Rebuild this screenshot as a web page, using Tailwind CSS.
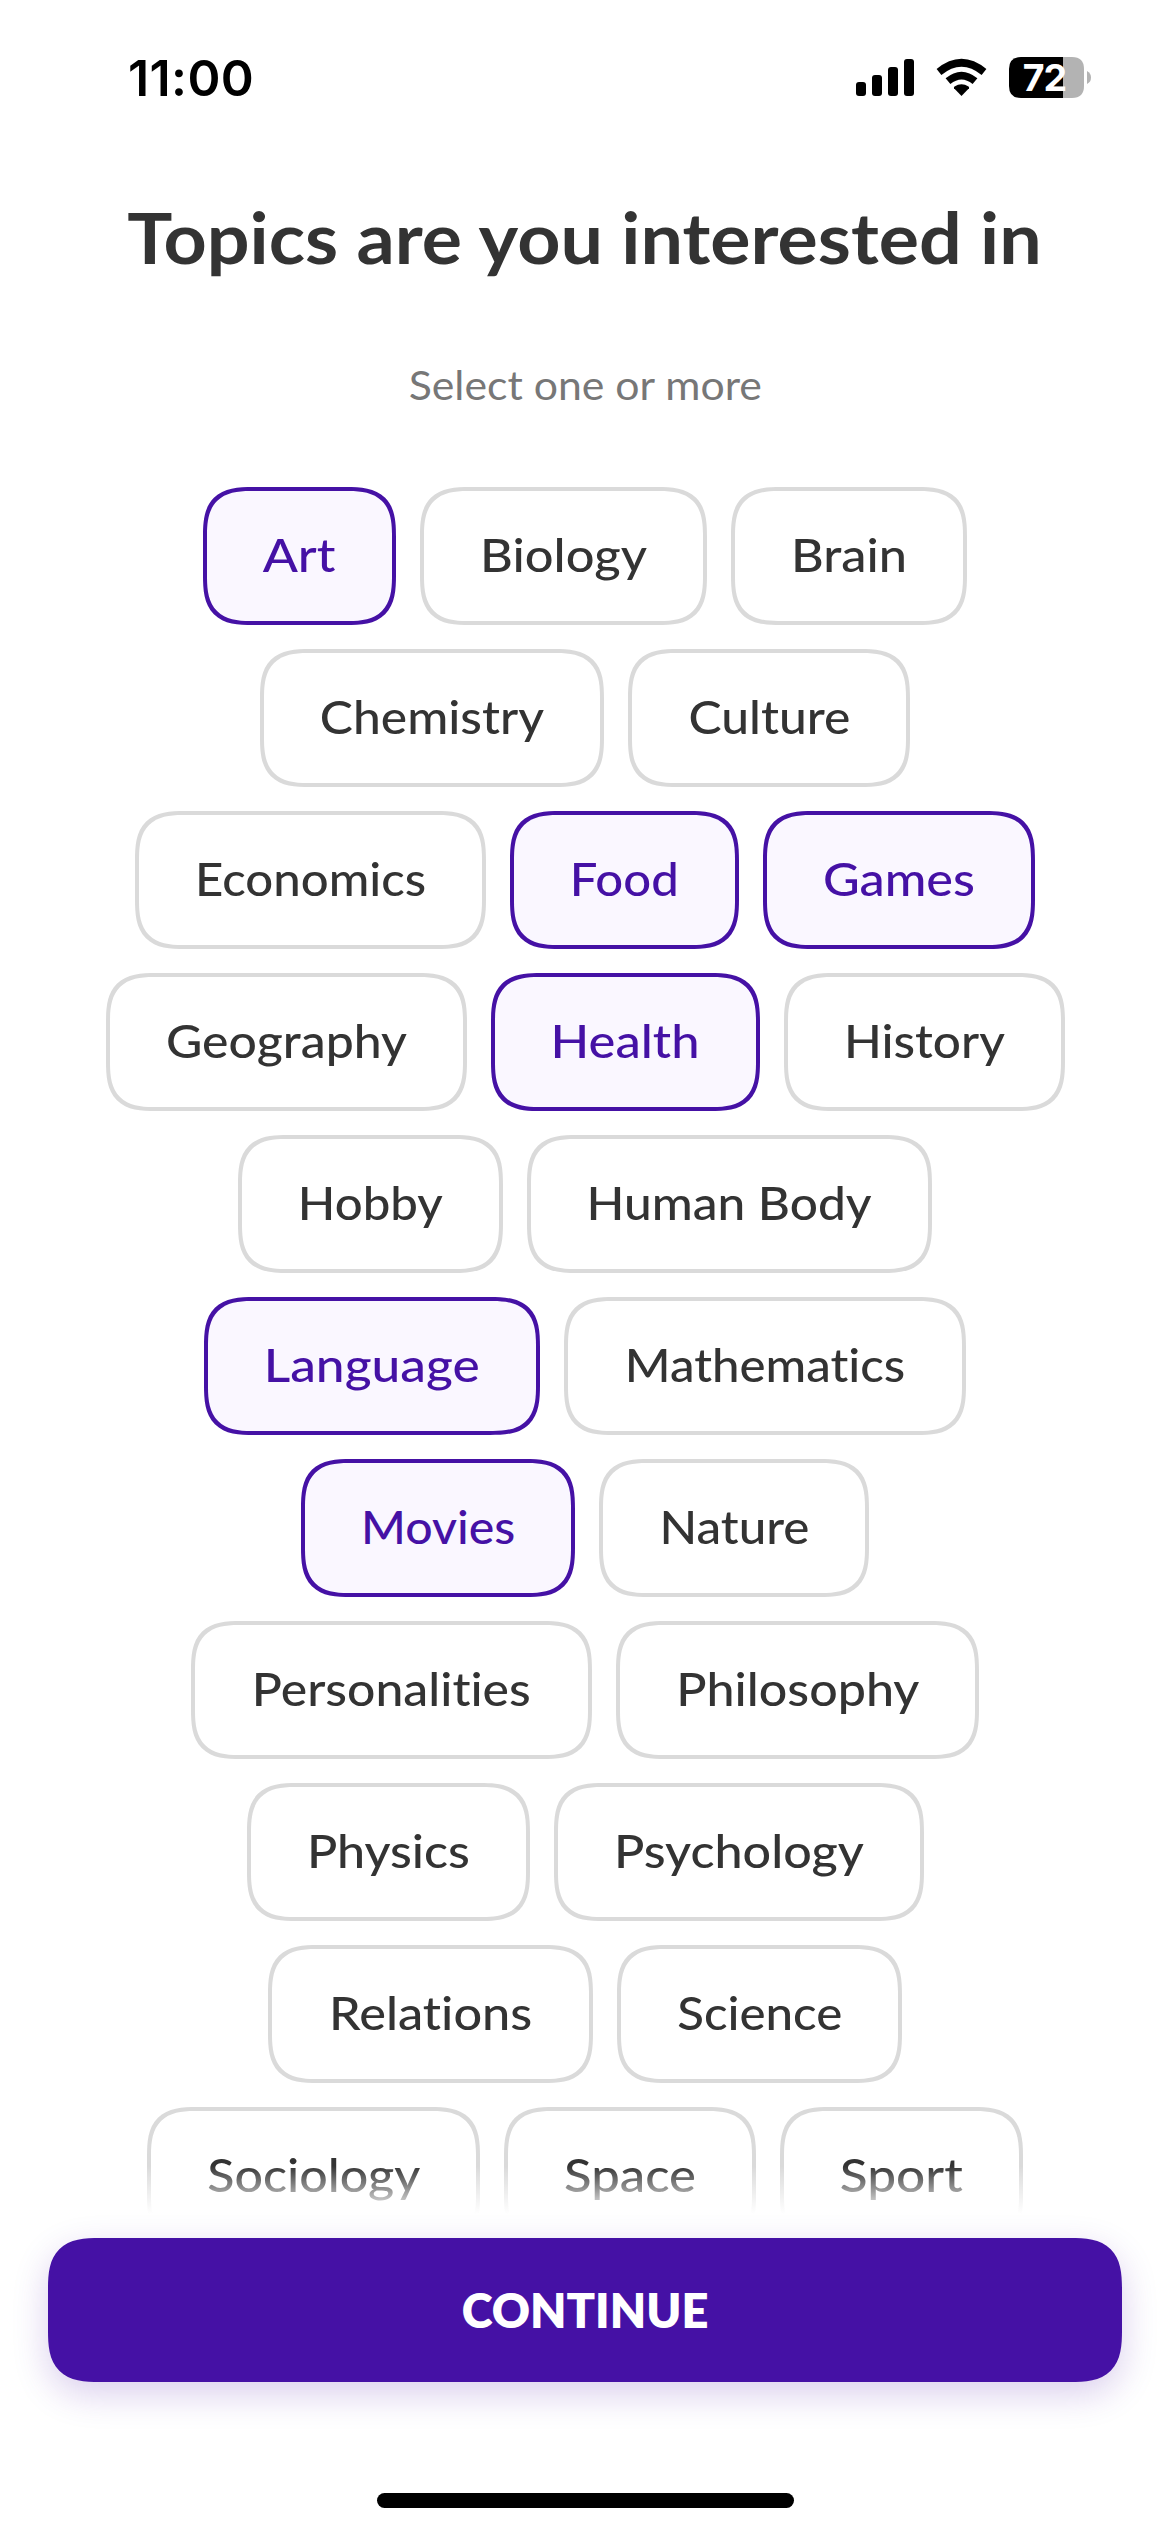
<!DOCTYPE html>
<html lang="en">
<head>
<meta charset="utf-8">
<title>Topics</title>
<script src="https://cdn.jsdelivr.net/npm/@tailwindcss/browser@4"></script>
</head>
<body class="bg-white">
<div class="w-[1170px] h-[2532px] overflow-hidden flex flex-col font-['Lato',sans-serif] text-[#333333] [font-variant-ligatures:none]">

  <header class="h-[141px] shrink-0 flex justify-between pl-[128px] pr-[78px] text-black">
    <div class="h-[156px] flex items-center font-['Inter',sans-serif] font-semibold text-[50px] leading-none tracking-[0.4px]">11:00</div>
    <svg class="mt-[50px]" width="240" height="56" viewBox="852 50 240 56">
      <g fill="#000">
        <rect x="856" y="82" width="10" height="14" rx="3"/>
        <rect x="872" y="75" width="10" height="21" rx="3"/>
        <rect x="888" y="67" width="10" height="29" rx="3"/>
        <rect x="904" y="59" width="10" height="37" rx="3"/>
        <path d="M961.5 96 L954 88.300 Q953.600 87.300 954.500 86.600 Q961.500 81.700 968.500 86.600 Q969.400 87.300 969 88.300 Z"/>
      </g>
      <g fill="none" stroke="#000" stroke-width="7.500">
        <path d="M939 72 Q961.500 53.500 984 72"/>
        <path d="M948 81.200 Q961.500 70 975 81.200"/>
      </g>
      <path d="M1021 57 H1063 V98 H1021 Q1009 98 1009 86 V69 Q1009 57 1021 57 Z" fill="#000"/>
      <path d="M1063 57 H1072 Q1084 57 1084 69 V86 Q1084 98 1072 98 H1063 Z" fill="#b3b3b3"/>
      <path d="M1087 71 Q1091 73 1091 77.500 Q1091 82 1087 84 Z" fill="#b3b3b3"/>
      <text x="1044.500" y="91" text-anchor="middle" font-family="Inter, sans-serif" font-weight="700" font-size="37.500" letter-spacing="-1" fill="#fff">72</text>
    </svg>
  </header>

  <h1 class="mt-[50px] h-[90px] shrink-0 flex items-center justify-center font-bold text-[71px] leading-none whitespace-nowrap"><span class="scale-x-[1.062]">Topics are you interested in</span></h1>
  <p class="mt-[77px] h-[52px] shrink-0 flex items-center justify-center text-[41px] leading-none text-[#777777]"><span class="scale-x-[1.043]">Select one or more</span></p>

  <main class="relative mt-[77px] h-[1727px] shrink-0 overflow-hidden flex flex-col items-center gap-6 text-[47px] font-medium leading-none [&_button]:h-[138px] [&_button]:shrink-0 [&_button]:border-4 [&_button]:pb-[3px] [&_button]:rounded-[38px] supports-[corner-shape:squircle]:[&_button]:rounded-[50px] [&_button]:[corner-shape:superellipse(1.5)] [&_button]:whitespace-nowrap [&_span]:inline-block">
    <div class="flex gap-6">
      <button class="w-[193px] border-[#4511a5] bg-[#faf7ff] text-[#4511a5]"><span class="scale-x-[1.1]">Art</span></button>
      <button class="w-[287px] border-[#dadada]"><span class="scale-x-[1.077]">Biology</span></button>
      <button class="w-[236px] border-[#dadada]"><span class="scale-x-[1.073]">Brain</span></button>
    </div>
    <div class="flex gap-6">
      <button class="w-[344px] border-[#dadada]"><span class="scale-x-[1.058]">Chemistry</span></button>
      <button class="w-[282px] border-[#dadada]"><span class="scale-x-[1.059]">Culture</span></button>
    </div>
    <div class="flex gap-6">
      <button class="w-[351px] border-[#dadada]"><span class="scale-x-[1.045]">Economics</span></button>
      <button class="w-[229px] border-[#4511a5] bg-[#faf7ff] text-[#4511a5]"><span class="scale-x-[1.044]">Food</span></button>
      <button class="w-[272px] border-[#4511a5] bg-[#faf7ff] text-[#4511a5]"><span class="scale-x-[1.072]">Games</span></button>
    </div>
    <div class="flex gap-6">
      <button class="w-[361px] border-[#dadada]"><span class="scale-x-[1.062]">Geography</span></button>
      <button class="w-[269px] border-[#4511a5] bg-[#faf7ff] text-[#4511a5]"><span class="scale-x-[1.078]">Health</span></button>
      <button class="w-[281px] border-[#dadada]"><span class="scale-x-[1.054]">History</span></button>
    </div>
    <div class="flex gap-6">
      <button class="w-[265px] border-[#dadada]"><span class="scale-x-[1.046]">Hobby</span></button>
      <button class="w-[405px] border-[#dadada]"><span class="scale-x-[1.056]">Human Body</span></button>
    </div>
    <div class="flex gap-6">
      <button class="w-[336px] border-[#4511a5] bg-[#faf7ff] text-[#4511a5]"><span class="scale-x-[1.095]">Language</span></button>
      <button class="w-[402px] border-[#dadada]"><span class="scale-x-[1.047]">Mathematics</span></button>
    </div>
    <div class="flex gap-6">
      <button class="w-[274px] border-[#4511a5] bg-[#faf7ff] text-[#4511a5]"><span class="scale-x-[1.025]">Movies</span></button>
      <button class="w-[270px] border-[#dadada]"><span class="scale-x-[1.049]">Nature</span></button>
    </div>
    <div class="flex gap-6">
      <button class="w-[401px] border-[#dadada]"><span class="scale-x-[1.062]">Personalities</span></button>
      <button class="w-[363px] border-[#dadada]"><span class="scale-x-[1.067]">Philosophy</span></button>
    </div>
    <div class="flex gap-6">
      <button class="w-[283px] border-[#dadada]"><span class="scale-x-[1.067]">Physics</span></button>
      <button class="w-[370px] border-[#dadada]"><span class="scale-x-[1.069]">Psychology</span></button>
    </div>
    <div class="flex gap-6">
      <button class="w-[325px] border-[#dadada]"><span class="scale-x-[1.073]">Relations</span></button>
      <button class="w-[285px] border-[#dadada]"><span class="scale-x-[1.048]">Science</span></button>
    </div>
    <div class="flex gap-6">
      <button class="w-[333px] border-[#dadada]"><span class="scale-x-[1.067]">Sociology</span></button>
      <button class="w-[252px] border-[#dadada]"><span class="scale-x-[1.082]">Space</span></button>
      <button class="w-[243px] border-[#dadada]"><span class="scale-x-[1.093]">Sport</span></button>
    </div>
    <!-- bottom fade of the scrolling list -->
    <div class="absolute inset-x-0 bottom-0 h-[48px] bg-linear-to-b from-white/0 to-white"></div>
  </main>

  <footer class="mt-[24px] shrink-0 flex flex-col items-center">
    <button class="w-[1074px] h-[144px] rounded-[38px] supports-[corner-shape:squircle]:rounded-[52px] [corner-shape:superellipse(1.5)] bg-[#4511a5] text-white text-[47px] leading-none font-extrabold shadow-[0_12px_36px_rgba(69,17,165,0.2)]">CONTINUE</button>
    <div class="mt-[111px] w-[417px] h-[15px] rounded-full bg-black"></div>
  </footer>
</div>
</body>
</html>
